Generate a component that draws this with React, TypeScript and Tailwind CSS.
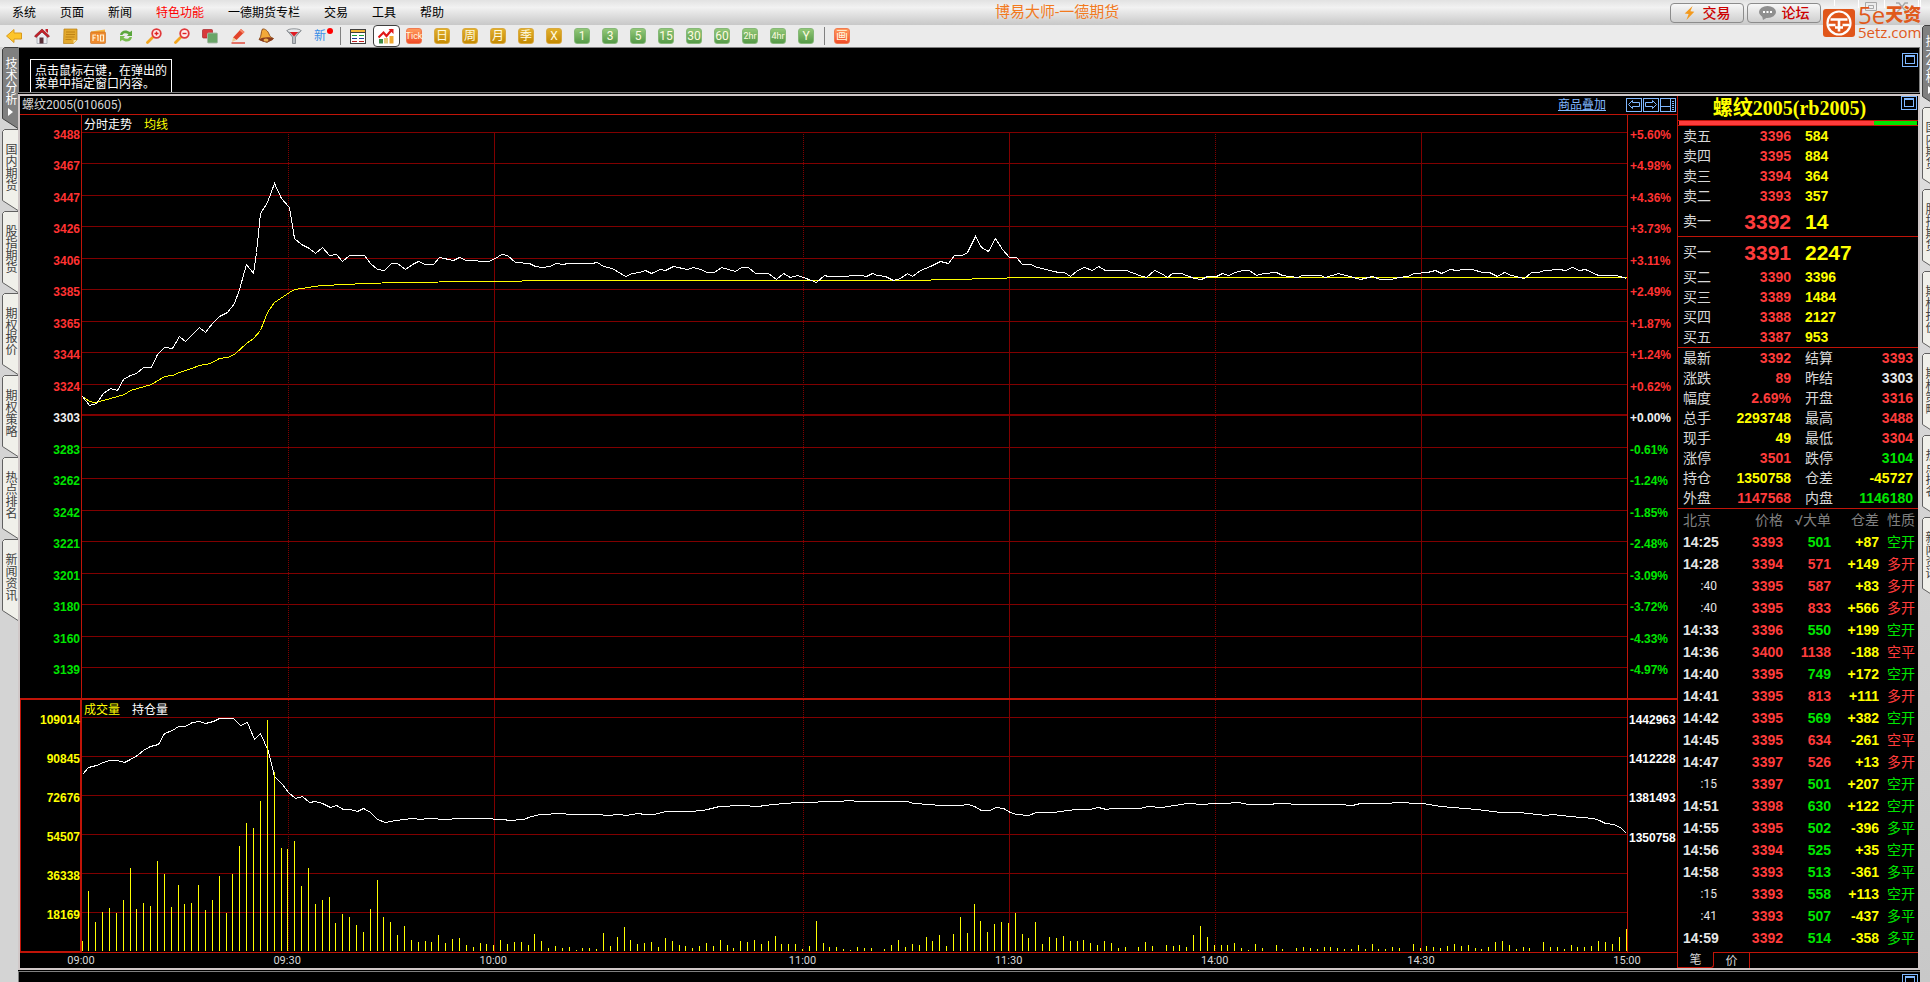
import { ReactNode, useState } from "react";
import clsx from "clsx";

const MENU = ["系统", "页面", "新闻", "特色功能", "一德期货专栏", "交易", "工具", "帮助"];

const SIDE_TABS = ["技术分析", "国内期货", "股指期货", "期权报价", "期权策略", "热点排名", "新闻资讯"];

const PERIODS = [
  { label: "Tick", tone: "red" },
  { label: "日", tone: "gold" },
  { label: "周", tone: "gold" },
  { label: "月", tone: "gold" },
  { label: "季", tone: "gold" },
  { label: "X", tone: "gold" },
  { label: "1", tone: "green" },
  { label: "3", tone: "green" },
  { label: "5", tone: "green" },
  { label: "15", tone: "green" },
  { label: "30", tone: "green" },
  { label: "60", tone: "green" },
  { label: "2hr", tone: "green" },
  { label: "4hr", tone: "green" },
  { label: "Y", tone: "green" },
];

const TONE: Record<string, string> = {
  red: "from-[#ff9a5c] to-[#f04a28] border-[#f07a50]",
  gold: "from-[#e2b02a] to-[#c48a00] border-[#d8a840]",
  green: "from-[#93c878] to-[#559a48] border-[#86b878]",
};

const PRICE_TICKS = [
  3488, 3467, 3447, 3426, 3406, 3385, 3365, 3344, 3324, 3303, 3283, 3262, 3242, 3221, 3201, 3180, 3160, 3139,
];

const PERCENT_TICKS = [
  "+5.60%", "+4.98%", "+4.36%", "+3.73%", "+3.11%", "+2.49%", "+1.87%", "+1.24%", "+0.62%", "+0.00%",
  "-0.61%", "-1.24%", "-1.85%", "-2.48%", "-3.09%", "-3.72%", "-4.33%", "-4.97%",
];

const VOLUME_TICKS = ["109014", "90845", "72676", "54507", "36338", "18169"];
const INTEREST_TICKS = ["1442963", "1412228", "1381493", "1350758", "", ""];

// minutes until the next label
const TIMES = [
  { label: "09:00", span: 30 },
  { label: "09:30", span: 30 },
  { label: "10:00", span: 45 },
  { label: "11:00", span: 30 },
  { label: "11:30", span: 30 },
  { label: "14:00", span: 30 },
  { label: "14:30", span: 30 },
  { label: "15:00", span: 0 },
];

const PRICE_LINE =
  "0,264 7,273 14,271 21,261 28,256 35,258 41,247 48,243 54,241 61,235 69,235 75,222 82,215 90,216 97,204 103,209 117,195 123,200 130,191 137,184 145,180 152,171 157,157 164,132 171,141 174,120 178,81 185,70 192,51 199,66 207,75 212,106 219,112 227,116 233,121 240,115 247,123 254,122 260,129 267,123 282,123 288,131 295,137 302,138 309,131 315,131 323,137 330,132 336,129 343,132 351,132 357,125 371,128 377,125 384,128 406,129 413,126 419,122 425,123 433,130 447,131 453,134 460,135 468,134 473,131 481,132 485,131 509,131 515,130 521,134 530,136 543,144 550,141 557,140 563,138 569,141 578,137 583,138 591,134 605,137 611,135 618,137 625,140 632,140 639,135 653,139 659,135 666,135 673,141 686,141 694,147 701,141 708,145 715,143 721,145 734,150 742,143 746,144 765,144 768,143 779,143 784,144 790,141 795,143 803,144 811,148 818,146 825,141 830,144 838,138 848,134 858,129 866,131 872,123 880,123 885,120 893,104 899,115 906,119 913,106 920,117 927,125 934,125 940,132 948,132 955,135 976,140 982,140 988,144 995,138 1002,135 1010,138 1016,134 1023,138 1044,138 1057,143 1064,145 1072,138 1079,141 1085,145 1090,141 1099,141 1112,146 1119,147 1125,144 1134,144 1140,141 1146,143 1153,140 1160,138 1167,138 1174,143 1181,141 1194,140 1200,143 1215,145 1220,143 1238,143 1243,145 1256,141 1271,145 1278,147 1290,144 1298,147 1308,147 1317,145 1325,144 1332,141 1345,140 1353,138 1359,141 1368,137 1374,138 1381,137 1390,137 1400,140 1407,140 1415,144 1422,140 1429,143 1442,146 1449,140 1456,140 1462,138 1477,137 1483,138 1490,135 1497,138 1503,137 1516,143 1534,143 1544,146";

const AVERAGE_LINE =
  "0,264 7,269 12,270 21,268 35,264 42,262 48,258 62,254 69,252 82,244 90,243 97,240 109,236 117,233 128,231 137,226 145,225 152,222 164,211 171,206 178,198 185,180 192,170 207,160 212,157 239,153 264,152 282,151 317,150 396,149 484,148 848,148 849,147 889,147 890,146 924,146 925,145 1545,145";

const INTEREST_LINE =
  "0,57 6,50 14,48 21,45 27,43 35,43 42,45 48,42 55,38 61,33 68,29 76,27 82,16 90,13 96,9 103,9 110,5 117,4 123,6 131,4 137,1 151,1 158,8 165,5 172,22 178,16 186,34 192,59 200,67 206,75 213,81 220,79 227,85 233,84 240,86 248,90 254,88 261,92 268,92 275,94 281,91 288,95 295,102 303,105 313,103 330,101 338,102 345,101 365,102 375,101 398,101 422,102 426,103 441,102 449,99 458,97 480,96 487,97 518,97 523,98 538,97 543,98 556,96 562,97 572,97 583,94 606,94 621,93 637,89 659,88 675,89 691,87 714,85 758,84 766,83 776,84 825,84 831,86 847,87 857,88 878,88 886,87 892,89 899,93 907,93 914,90 921,91 928,95 934,97 946,98 954,95 971,95 993,92 1007,92 1016,90 1024,92 1030,91 1058,91 1065,89 1080,90 1092,88 1105,86 1121,87 1131,86 1141,86 1156,85 1166,87 1188,87 1194,86 1223,87 1256,87 1270,88 1278,86 1307,86 1312,85 1341,86 1358,89 1394,92 1419,95 1437,95 1464,98 1470,97 1488,99 1511,101 1517,103 1523,106 1531,107 1538,110 1544,116";

// one bar a minute
const VOLUME = [
  10, 60, 29, 39, 43, 38, 51, 83, 42, 48, 45, 90, 77, 44, 66, 47, 48, 66, 41, 51, 75, 38, 77, 105, 128, 123, 150, 231, 179, 103,
  102, 110, 65, 83, 47, 51, 54, 28, 37, 34, 26, 19, 42, 71, 34, 29, 16, 25, 11, 9, 10, 9, 16, 8, 12, 13, 6, 4, 8, 7,
  6, 11, 7, 9, 9, 6, 17, 10, 3, 5, 3, 4, 1, 3, 3, 2, 18, 5, 14, 24, 11, 7, 8, 9, 4, 13, 10, 6, 5, 3,
  5, 8, 5, 11, 6, 3, 10, 9, 11, 7, 10, 15, 7, 7, 7, 2, 5, 30, 8, 4, 4, 2, 1, 4, 3, 3, 0, 2, 6, 11,
  4, 7, 6, 14, 10, 16, 5, 17, 34, 18, 47, 30, 19, 27, 29, 28, 38, 17, 13, 29, 7, 14, 13, 15, 10, 10, 11, 8, 6, 10,
  8, 3, 4, 0, 4, 9, 5, 0, 6, 5, 6, 4, 16, 25, 14, 6, 6, 6, 8, 3, 1, 7, 3, 0, 6, 2, 0, 3, 4, 3,
  2, 4, 4, 3, 2, 2, 6, 2, 7, 2, 2, 4, 3, 0, 7, 3, 5, 4, 3, 5, 7, 5, 6, 3, 2, 4, 9, 10, 6, 2,
  4, 3, 0, 9, 4, 4, 2, 6, 4, 4, 5, 10, 9, 7, 14, 22,
];

const SELLS = [
  ["卖五", "3396", "584"],
  ["卖四", "3395", "884"],
  ["卖三", "3394", "364"],
  ["卖二", "3393", "357"],
  ["卖一", "3392", "14"],
];

const BUYS = [
  ["买一", "3391", "2247"],
  ["买二", "3390", "3396"],
  ["买三", "3389", "1484"],
  ["买四", "3388", "2127"],
  ["买五", "3387", "953"],
];

const COLOR: Record<string, string> = {
  r: "text-[#ff3c3c]",
  g: "text-[#00e600]",
  y: "text-[#ffff00]",
  w: "text-[#e6e6e6]",
};

const STATS = [
  ["最新", "3392", "r"], ["结算", "3393", "r"],
  ["涨跌", "89", "r"], ["昨结", "3303", "w"],
  ["幅度", "2.69%", "r"], ["开盘", "3316", "r"],
  ["总手", "2293748", "y"], ["最高", "3488", "r"],
  ["现手", "49", "y"], ["最低", "3304", "r"],
  ["涨停", "3501", "r"], ["跌停", "3104", "g"],
  ["持仓", "1350758", "y"], ["仓差", "-45727", "y"],
  ["外盘", "1147568", "r"], ["内盘", "1146180", "g"],
];

const TRADES = [
  ["14:25", "3393", "501", "+87", "空开", "g"],
  ["14:28", "3394", "571", "+149", "多开", "r"],
  [":40", "3395", "587", "+83", "多开", "r"],
  [":40", "3395", "833", "+566", "多开", "r"],
  ["14:33", "3396", "550", "+199", "空开", "g"],
  ["14:36", "3400", "1138", "-188", "空平", "r"],
  ["14:40", "3395", "749", "+172", "空开", "g"],
  ["14:41", "3395", "813", "+111", "多开", "r"],
  ["14:42", "3395", "569", "+382", "空开", "g"],
  ["14:45", "3395", "634", "-261", "空平", "r"],
  ["14:47", "3397", "526", "+13", "多开", "r"],
  [":15", "3397", "501", "+207", "空开", "g"],
  ["14:51", "3398", "630", "+122", "空开", "g"],
  ["14:55", "3395", "502", "-396", "多平", "g"],
  ["14:56", "3394", "525", "+35", "空开", "g"],
  ["14:58", "3393", "513", "-361", "多平", "g"],
  [":15", "3393", "558", "+113", "空开", "g"],
  [":41", "3393", "507", "-437", "多平", "g"],
  ["14:59", "3392", "514", "-358", "多平", "g"],
];

const TOOLS: { name: string; icon: ReactNode }[] = [
  {
    name: "后退",
    icon: <path d="M0.5 8 8 1.5V5h7.5v6H8v3.5Z" fill="#fdc52c" stroke="#d99a1c" />,
  },
  {
    name: "主页",
    icon: (
      <>
        <path d="M3 8v7.5h10V8L8 3.5Z" fill="#e9edf2" stroke="#9a9fa8" strokeWidth="0.7" />
        <path d="M0.5 8 8 1l7.5 7-1.5 1.5L8 4 2 9.500Z" fill="#c8202a" stroke="#7c1018" strokeWidth="0.6" />
        <path d="M11.500 1h2.500v4l-2.500-2Z" fill="#c8202a" />
        <path d="M5.500 9.500h4v6h-4Z" fill="#5a3038" />
      </>
    ),
  },
  {
    name: "记事",
    icon: (
      <>
        <path d="M2 1h13v11l-3.500 3.500H1.500L2 1Z" fill="#e3a92e" stroke="#b98012" strokeWidth="0.7" />
        <path d="M4 4h9M4 6.500h9M3.500 9h9M3.500 11.500h6" stroke="#b57a10" strokeWidth="0.8" />
        <path d="M15 12h-3.500v3.500Z" fill="#fbe19a" />
      </>
    ),
  },
  {
    name: "F10",
    icon: (
      <>
        <path d="M1 3.500 15 1.500v3H1Z" fill="#f7b640" />
        <rect x="0.500" y="4" width="15" height="11.500" rx="1" fill="#ee8a2c" stroke="#c86a18" strokeWidth="0.6" />
        <path d="M3 13V7h3M3 9.800h2.500M8 13V7M7 8l1-1M10.500 7h3v6h-3Z" fill="none" stroke="#fff3d8" strokeWidth="1.200" />
      </>
    ),
  },
  {
    name: "刷新",
    icon: (
      <>
        <path d="M2 7c.5-3.500 3.500-5 6.500-4.500L12 4l2-1.500V8H9l1.500-1.700C8 4.500 5 5 4.500 7Z" fill="#5aa63c" />
        <path d="M14 9c-.5 3.500-3.500 5-6.500 4.500L4 12l-2 1.500V8h5L5.500 9.700C8 11.500 11 11 11.500 9Z" fill="#79bd50" />
      </>
    ),
  },
  {
    name: "放大",
    icon: (
      <>
        <path d="M1.500 14.500 6.500 9.500" stroke="#f3a51e" strokeWidth="2.800" strokeLinecap="round" />
        <circle cx="10.500" cy="5.500" r="4.300" fill="#fdeeee" stroke="#e0383a" strokeWidth="1.800" />
        <path d="M8.500 5.500h4M10.500 3.500v4" stroke="#e02020" strokeWidth="1.400" />
      </>
    ),
  },
  {
    name: "缩小",
    icon: (
      <>
        <path d="M1.500 14.500 6.500 9.500" stroke="#f3a51e" strokeWidth="2.800" strokeLinecap="round" />
        <circle cx="10.500" cy="5.500" r="4.300" fill="#fdeeee" stroke="#e0383a" strokeWidth="1.800" />
        <path d="M8.500 5.500h4" stroke="#e02020" strokeWidth="1.400" />
      </>
    ),
  },
  {
    name: "叠加",
    icon: (
      <>
        <rect x="0.500" y="1.500" width="10" height="8.500" rx="1" fill="#d8393c" stroke="#a82428" strokeWidth="0.700" />
        <rect x="5.500" y="5" width="10" height="10" rx="1" fill="#6aa568" stroke="#a8b8a8" strokeWidth="0.900" />
      </>
    ),
  },
  {
    name: "画线",
    icon: (
      <>
        <path d="M3 9.500 11 1l3.500 3L6.500 12Z" fill="#e2432a" />
        <path d="M11 1 14.500 4 13 5.500 9.500 2.500Z" fill="#f58a6c" />
        <path d="M3 9.500 6.500 12 2 14Z" fill="#f0c890" />
        <path d="M1.500 15H15" stroke="#e04030" strokeWidth="1.400" />
      </>
    ),
  },
  {
    name: "预警",
    icon: (
      <>
        <path d="M4.500 1C7 .5 10 3 11 6c.6 2 2 3.500 4.500 4.500L9 14.500 1 11.500C4 8 2.500 4 4.500 1Z" fill="#f2a93a" stroke="#8a4a18" strokeWidth="0.900" />
        <path d="M1 11.500C4 9 12 8.500 15.500 10.500 14 14 5 15.500 1 11.500Z" fill="#8a3c1e" />
        <ellipse cx="8" cy="12" rx="2.500" ry="1.500" fill="#f0b454" />
      </>
    ),
  },
  {
    name: "筛选",
    icon: (
      <>
        <path d="M1 2.500 6.500 9v6.500h3V9L15 2.500Z" fill="#b9bdc2" stroke="#777c82" strokeWidth="0.800" />
        <ellipse cx="8" cy="2.800" rx="7" ry="2" fill="#e8eaec" stroke="#777c82" strokeWidth="0.800" />
        <path d="M4 4h8L8 8.500Z" fill="#e01c24" />
      </>
    ),
  },
];

function Separator() {
  return (
    <span className="flex h-full w-2 items-center justify-center">
      <span className="h-[18px] w-px bg-[#808080]" />
    </span>
  );
}

function Tile({ label, tone }: { label: string; tone: string }) {
  return (
    <button type="button" className="flex h-full w-7 items-center justify-center">
      <span
        className={clsx(
          "flex size-4 items-center justify-center rounded-[3px] border bg-linear-to-b leading-none text-[#fffbe0]",
          TONE[tone],
          label.length > 2 ? "text-[9px]" : "text-[12px]"
        )}
      >
        {label}
      </span>
    </button>
  );
}

function Toolbar() {
  return (
    <div className="flex h-[22px] items-center bg-[#ebebeb]">
      {TOOLS.map(({ name, icon }) => (
        <button key={name} type="button" aria-label={name} className="flex h-full w-7 items-center justify-center">
          <svg viewBox="0 0 16 16" className="size-4">{icon}</svg>
        </button>
      ))}
      <button type="button" className="relative flex h-full w-7 items-center justify-center pr-1 text-[12px] leading-none text-[#3a8ee6]">
        新
        <span className="absolute top-[3px] right-[3px] size-[6px] rounded-full bg-[#ff0000]" />
      </button>
      <Separator />
      <button type="button" aria-label="报价" className="flex h-full w-7 items-center justify-center">
        <svg viewBox="0 0 16 16" className="size-4" shapeRendering="crispEdges">
          <rect x="0.500" y="1.500" width="15" height="14" fill="#fff" stroke="#404040" />
          <path d="M1 2h14v2H1Z" fill="#f5b83a" />
          <path d="M1 4.500h14" stroke="#404040" />
          <path d="M2 7.500h5M9 7.500h5" stroke="#18a038" />
          <path d="M2 10.500h5M9 10.500h5" stroke="#203c98" />
          <path d="M2 13.500h5M9 13.500h5" stroke="#c02020" />
        </svg>
      </button>
      <button type="button" aria-label="分时图" className="flex h-full w-7 items-center justify-center">
        <span className="flex h-[22px] w-[27px] items-center justify-center rounded-[4px] border border-[#404040] bg-white">
          <svg viewBox="0 0 16 16" className="size-4">
            <path d="M1 11h4v4.500H1Z" fill="#3c8c48" />
            <path d="M6 10h4v5.500H6Z" fill="#e8c878" />
            <path d="M11.500 8h4v7.500h-4Z" fill="#f0a830" />
            <path d="M0.500 9.500 5.500 4.500 8.500 8 14 1.500" fill="none" stroke="#e01818" strokeWidth="2.200" />
            <path d="M10.500 1h5v5Z" fill="#e01818" />
          </svg>
        </span>
      </button>
      {PERIODS.map((period) => (
        <Tile key={period.label} {...period} />
      ))}
      <Separator />
      <Tile label="画" tone="red" />
    </div>
  );
}

function Logo() {
  return (
    <div className="absolute top-[5px] right-[5px] z-10 flex items-start gap-[3px] text-[#e05a1c]">
      <svg viewBox="0 0 32 28" className="mt-1 h-7 w-8">
        <rect width="32" height="28" rx="3" fill="#e0561a" />
        <circle cx="16" cy="14" r="11.500" fill="none" stroke="#fff" strokeWidth="2.200" />
        <path d="M7.500 10.500h17M6 16h6.500M19.500 16H26M16 10.500v12M12 18.500h8" fill="none" stroke="#fff" strokeWidth="2.600" />
      </svg>
      <div className="w-[67px]">
        <div className="flex h-5 items-center text-[18px] leading-5 font-black">
          <span className="font-['Open_Sans',sans-serif] text-[24px] leading-5 font-medium">5e</span>
          <span>天资</span>
        </div>
        <div className="font-['Open_Sans',sans-serif] text-[15px] leading-[15px]">5etz.com</div>
      </div>
    </div>
  );
}

function TitleBar() {
  return (
    <header className="relative flex h-[25px] items-center justify-between bg-linear-to-b from-[#e2e2e2] via-[#f2f2f2] via-30% to-[#c8c8c8] pl-3">
      <nav className="flex gap-6 text-[12px]">
        {MENU.map((item) => (
          <button key={item} type="button" className={item === "特色功能" ? "text-[#ff0000]" : "text-black"}>
            {item}
          </button>
        ))}
      </nav>
      <h1 className="text-[15px] leading-none text-[#f27a1e]">博易大师-一德期货</h1>
      <div className="flex items-center gap-[3px] text-[14px] leading-none font-medium text-[#cc0000]">
        <button type="button" className="flex h-5 w-[74px] items-center justify-center gap-2 rounded-[4px] border border-[#8c8c8c] bg-linear-to-b from-[#f8f8f8] to-[#cfcfcf]">
          <svg viewBox="0 0 12 16" className="h-[14px] w-[11px]">
            <path d="M9.500 0 0.500 8.500 5 9 2.500 16 11.500 6.500 7 6Z" fill="#f39a1e" />
          </svg>
          交易
        </button>
        <button type="button" className="flex h-5 w-[74px] items-center justify-center gap-[6px] rounded-[4px] border border-[#8c8c8c] bg-linear-to-b from-[#f8f8f8] to-[#cfcfcf]">
          <svg viewBox="0 0 17 14" className="h-[14px] w-[17px]">
            <ellipse cx="8.500" cy="6" rx="8.500" ry="6" fill="#8f8f8f" />
            <path d="M3 9.500 4 14l5-3Z" fill="#8f8f8f" />
            <path d="M4 6h2M7.500 6h2M11 6h2" stroke="#fff" strokeWidth="1.800" />
          </svg>
          论坛
        </button>
        <svg viewBox="0 0 106 25" className="h-[25px] w-[106px]" fill="none" stroke="#fff">
          <path d="M10.500 0v6M34.500 0v8M60.500 0v8M94.500 0v8M96.500 0v8" />
          <path d="M41.500 2.500h11v8h-11ZM44.500 5.500h5v3h-5Z" stroke="#a8a8a8" />
          <path d="M72 3h3l3 4 3-4h3M73 12l5-5 5 5" stroke="#a8a8a8" strokeWidth="1.500" />
        </svg>
      </div>
      <Logo />
    </header>
  );
}

function SideRail({ active, onSelect }: { active: string; onSelect: (tab: string) => void }) {
  return (
    <div className="flex w-[18px] shrink-0 flex-col pl-[2px]">
      {SIDE_TABS.map((tab) => (
        <button
          key={tab}
          type="button"
          onClick={() => onSelect(tab)}
          className={clsx(
            "relative flex h-[82px] w-4 flex-col items-center text-[12px]",
            tab === active ? "pt-[10px] text-white" : "pt-[14px] text-[#404040]"
          )}
        >
          <svg viewBox="0 0 16 82" className="absolute inset-0 h-[82px] w-4">
            <path
              d="M16 0.500H2.500L0.500 2.500V71.500L16 81.500"
              fill={tab === active ? "#808080" : "#f0f0ea"}
              stroke={tab === active ? "#404040" : "#606060"}
            />
          </svg>
          <span className="relative leading-4 [writing-mode:vertical-rl]">{tab}</span>
          {tab === active && (
            <svg viewBox="0 0 5 8" className="relative mt-[3px] h-2 w-[5px]">
              <path d="M0 0 5 4 0 8Z" fill="#fff" />
            </svg>
          )}
        </button>
      ))}
    </div>
  );
}

function PaneButton({ label, children }: { label: string; children: ReactNode }) {
  return (
    <button type="button" aria-label={label} className="h-[14px] w-4 shrink-0">
      <svg viewBox="0 0 16 14" className="h-[14px] w-4" fill="none" stroke="#80b8ff" shapeRendering="crispEdges">
        <rect x="0.500" y="0.500" width="15" height="13" />
        {children}
      </svg>
    </button>
  );
}

function Maximize() {
  return (
    <PaneButton label="最大化">
      <path d="M3.500 2.500h9v8h-9ZM3 3.500h10" />
    </PaneButton>
  );
}

const VERTICALS = [206, 412, 721, 927, 1133, 1339];

function Verticals({ from, to }: { from: number; to: number }) {
  return VERTICALS.map((x, i) => (
    <line
      key={x}
      x1={x + 0.5}
      x2={x + 0.5}
      y1={from}
      y2={to}
      stroke="#800000"
      strokeDasharray={i % 2 === 0 ? "1 1" : undefined}
      vectorEffect="non-scaling-stroke"
    />
  ));
}

function tickColor(i: number) {
  if (i === 9) return "text-[#f0f0f0]";
  return i < 9 ? "text-[#ff3232]" : "text-[#00e600]";
}

function PricePane() {
  return (
    <div className="flex min-h-[583px] grow-[583] basis-0 border-b-2 border-[#c01408]">
      <div className="flex w-[62px] shrink-0 flex-col justify-between border-r border-[#c01408] pt-3 pr-px pb-5 text-right">
        {PRICE_TICKS.map((tick, i) => (
          <span key={tick} className={tickColor(i)}>{tick}</span>
        ))}
      </div>
      <div className="flex min-w-0 flex-1 flex-col">
        <div className="flex h-[17px] shrink-0 gap-3 pl-[2px] leading-5 font-normal">
          <span className="text-white">分时走势</span>
          <span className="text-[#ffff00]">均线</span>
        </div>
        <svg viewBox="0 0 1545 566" preserveAspectRatio="none" className="min-h-0 w-full flex-1" fill="none" shapeRendering="crispEdges">
          <Verticals from={0} to={566} />
          {PRICE_TICKS.map((tick, i) =>
            i === 9 ? (
              <line key={tick} x1="0" x2="1545" y1="283" y2="283" stroke="#800000" strokeWidth="2" />
            ) : (
              <line key={tick} x1="0" x2="1545" y1={Math.floor(i * 31.5) + 0.5} y2={Math.floor(i * 31.5) + 0.5} stroke="#800000" />
            )
          )}
          <g transform="translate(0.5 0.5)">
            <polyline points={AVERAGE_LINE} stroke="#ffff00" vectorEffect="non-scaling-stroke" />
            <polyline points={PRICE_LINE} stroke="#ffffff" vectorEffect="non-scaling-stroke" />
          </g>
        </svg>
      </div>
      <div className="flex w-[50px] shrink-0 flex-col justify-between border-l border-[#c01408] pt-3 pb-5 pl-[2px]">
        {PERCENT_TICKS.map((tick, i) => (
          <span key={i} className={tickColor(i)}>{tick}</span>
        ))}
      </div>
    </div>
  );
}

function VolumePane() {
  return (
    <div className="flex min-h-[252px] grow-[252] basis-0 border-b border-[#c01408]">
      <div className="flex w-[62px] shrink-0 flex-col justify-between border-r-2 border-b border-l border-[#c01408] pt-3 pb-7 text-right text-[#ffff00]">
        {VOLUME_TICKS.map((tick) => (
          <span key={tick}>{tick}</span>
        ))}
      </div>
      <div className="flex min-w-0 flex-1 flex-col">
        <div className="flex h-[17px] shrink-0 gap-3 pl-[2px] leading-5 font-normal">
          <span className="text-[#ffff00]">成交量</span>
          <span className="text-white">持仓量</span>
        </div>
        <svg viewBox="0 0 1545 235" preserveAspectRatio="none" className="min-h-0 w-full flex-1 overflow-visible" fill="none" shapeRendering="crispEdges">
          <Verticals from={-17} to={235} />
          {VOLUME_TICKS.map((tick, i) => (
            <line key={tick} x1="0" x2="1545" y1={i * 39 + 0.5} y2={i * 39 + 0.5} stroke="#800000" />
          ))}
          <polyline points={INTEREST_LINE} transform="translate(0.5 0.5)" stroke="#ffffff" vectorEffect="non-scaling-stroke" />
          {VOLUME.map((height, i) => {
            const x = Math.floor((i * 1544) / 225);
            return <rect key={i} x={x} y={234 - height} width="1" height={height} fill="#ffff00" />;
          })}
        </svg>
      </div>
      <div className="flex w-[50px] shrink-0 flex-col justify-between border-l border-[#c01408] pt-3 pb-7 pl-px text-white">
        {INTEREST_TICKS.map((tick, i) => (
          <span key={i} className="h-4">{tick}</span>
        ))}
      </div>
    </div>
  );
}

function ChartPanel() {
  return (
    <section className="flex min-w-0 flex-1 flex-col">
      <div className="flex h-[19px] shrink-0 items-center border-b border-[#c01408] pl-[2px] text-[12px]">
        <h2 className="flex-1 leading-none text-[#d8d8d8]">螺纹2005(010605)</h2>
        <a href="#overlay" className="mr-5 leading-none text-[#80b8ff] underline">商品叠加</a>
        <div className="mr-px mb-px flex gap-px">
          <PaneButton label="向左">
            <path d="M2.500 6.500 6.500 2.500v2h7v4h-7v2Z" shapeRendering="auto" />
          </PaneButton>
          <PaneButton label="向右">
            <path d="M13.500 6.500 9.500 2.500v2h-7v4h7v2Z" shapeRendering="auto" />
          </PaneButton>
          <PaneButton label="侧栏">
            <path d="M1 8.500h10M10.500 1v12M12 3.500h2M12 5.500h2M12 7.500h2M12 9.500h2M12 11.500h2" />
          </PaneButton>
        </div>
      </div>
      <div className="flex flex-1 flex-col font-['Liberation_Sans','Noto_Sans_CJK_SC',sans-serif] text-[12px] leading-4 font-bold">
        <PricePane />
        <VolumePane />
      </div>
      <div className="flex h-[15px] shrink-0 pr-[50px] pl-[61px] text-[11px] leading-[15px] text-[#d8d8d8]">
        {TIMES.map(({ label, span }) => (
          <div key={label} className="w-0" style={{ flexGrow: span }}>
            <span className="inline-block -translate-x-1/2">{label}</span>
          </div>
        ))}
      </div>
    </section>
  );
}

function BookRow({ row, best }: { row: string[]; best: boolean }) {
  const [label, price, volume] = row;
  return (
    <div className={clsx("grid grid-cols-2 gap-x-[14px] px-[5px]", best ? "h-[30px]" : "h-5")}>
      <div className="flex items-center justify-between">
        <span className="text-[#d8d8d8]">{label}</span>
        <span className={clsx("font-['Liberation_Sans',sans-serif] font-bold text-[#ff3c3c]", best && "text-[21px]")}>{price}</span>
      </div>
      <div className={clsx("flex items-center font-['Liberation_Sans',sans-serif] font-bold text-[#ffff00]", best && "text-[21px]")}>
        {volume}
      </div>
    </div>
  );
}

function QuotePanel() {
  const [tab, setTab] = useState("笔");

  return (
    <aside className="flex w-[241px] shrink-0 flex-col border-l border-[#c01408] text-[14px] leading-none">
      <div className="flex h-6 items-center">
        <h2 className="flex-1 text-center font-['Liberation_Serif','Noto_Sans_CJK_SC',serif] text-[20px] leading-none font-semibold text-[#ffff00]">
          螺纹2005(rb2005)
        </h2>
        <div className="mr-px mb-2">
          <Maximize />
        </div>
      </div>
      <div className="flex h-[6px] border-y border-[#c01408] px-px">
        <div className="bg-[#ff3c3c]" style={{ width: "82%" }} />
        <div className="flex-1 bg-[#00e600]" />
      </div>

      {/* Order book */}
      <div className="border-b border-[#c01408]">
        {SELLS.map((row, i) => (
          <BookRow key={row[0]} row={row} best={i === 4} />
        ))}
      </div>
      <div className="border-b border-[#c01408]">
        {BUYS.map((row, i) => (
          <BookRow key={row[0]} row={row} best={i === 0} />
        ))}
      </div>

      <dl className="grid grid-cols-2 gap-x-[14px] border-b border-[#c01408] px-[5px]">
        {STATS.map(([label, value, color]) => (
          <div key={label} className="flex h-5 items-center justify-between">
            <dt className="text-[#d8d8d8]">{label}</dt>
            <dd className={clsx("font-['Liberation_Sans',sans-serif] font-bold", COLOR[color])}>{value}</dd>
          </div>
        ))}
      </dl>

      {/* Big trades */}
      <div className="pr-[3px] pl-[5px]">
        <table className="w-full table-fixed text-right">
          <thead>
            <tr className="h-[22px] text-[#808080]">
              <th className="w-[46px] text-left font-normal">北京</th>
              <th className="w-[54px] font-normal">价格</th>
              <th className="w-12 font-normal whitespace-nowrap">√大单</th>
              <th className="w-12 font-normal">仓差</th>
              <th className="font-normal">性质</th>
            </tr>
          </thead>
          <tbody className="font-['Liberation_Sans','Noto_Sans_CJK_SC',sans-serif] font-bold">
            {TRADES.map(([time, price, size, change, kind, color], i) => (
              <tr key={i} className="h-[22px]">
                <td className={clsx("text-[#e6e6e6]", time.length > 3 ? "text-left" : "pr-3 font-['Roboto',sans-serif] text-[12px] font-normal")}>
                  {time}
                </td>
                <td className="text-[#ff3c3c]">{price}</td>
                <td className={COLOR[color]}>{size}</td>
                <td className="text-[#ffff00]">{change}</td>
                <td className={clsx("font-normal", COLOR[color])}>{kind}</td>
              </tr>
            ))}
          </tbody>
        </table>
      </div>

      <div className="mt-auto flex h-4 text-[12px] text-[#d8d8d8]">
        {["笔", "价"].map((name) => (
          <button
            key={name}
            type="button"
            onClick={() => setTab(name)}
            className={clsx(
              "w-9 border-r border-[#c01408]",
              tab === name ? "rounded-br-[3px] border-b" : "border-t"
            )}
          >
            {name}
          </button>
        ))}
        <div className="flex-1 border-t border-[#c01408]" />
      </div>
    </aside>
  );
}

export default function App() {
  const [active, setActive] = useState("技术分析");

  return (
    <div className="flex min-h-screen flex-col overflow-hidden bg-[#d4d4d4] font-['Roboto','Noto_Sans_CJK_SC',sans-serif]">
      <TitleBar />
      <div className="flex flex-1">
        <div className="flex min-w-0 flex-1 flex-col">
          <Toolbar />
          <div className="flex flex-1">
            <SideRail active={active} onSelect={setActive} />
            <main className="flex min-w-0 flex-1 flex-col bg-black">
              {/* Empty pane */}
              <div className="mb-px flex h-[46px] shrink-0 items-start justify-between overflow-hidden border border-[#808080] pr-px">
                <p className="mt-[11px] ml-[11px] border border-b-0 border-white px-1 pt-[5px] pb-3 text-[12px] leading-[13px] text-white">
                  点击鼠标右键，在弹出的
                  <br />
                  菜单中指定窗口内容。
                </p>
                <div className="mt-[2px] h-[14px]">
                  <Maximize />
                </div>
              </div>
              <div className="flex flex-1 border-2 border-[#d0c8c8]">
                <ChartPanel />
                <QuotePanel />
              </div>
              <div className="mt-px flex h-[11px] shrink-0 justify-end overflow-hidden border-t border-l border-[#808080] pt-[2px] pr-[2px]">
                <Maximize />
              </div>
            </main>
          </div>
        </div>
        <div className="w-[10px] shrink-0 overflow-hidden bg-linear-to-b from-[#e0e0e0] to-[#c8c8c8]">
          <SideRail active={active} onSelect={setActive} />
        </div>
      </div>
    </div>
  );
}
